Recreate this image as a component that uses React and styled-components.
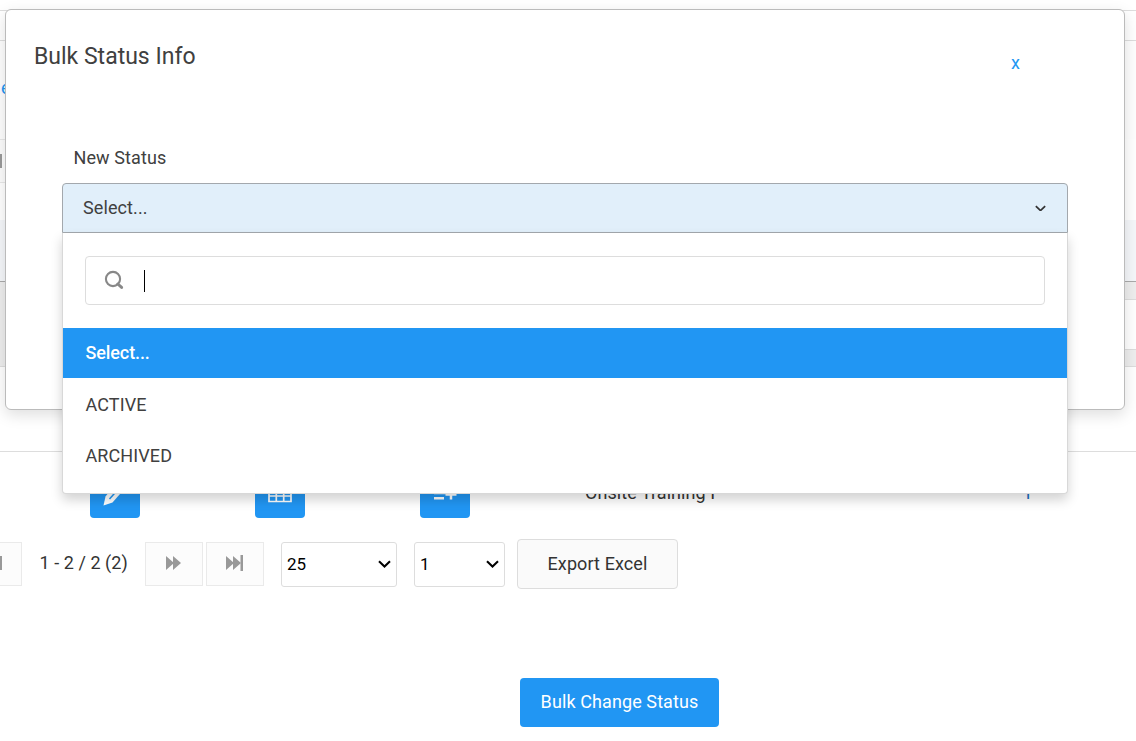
import styled, { createGlobalStyle } from 'styled-components';


const GlobalStyle = createGlobalStyle`
    * {
        box-sizing: border-box;
    }

    body {
        margin: 0;
        background: #fff;
        color: #333;
        font-family: Roboto, "Liberation Sans", sans-serif;
        font-size: 18px;
        overflow: hidden;
    }
`;

const statuses = ['Select...', 'ACTIVE', 'ARCHIVED'];

function PencilIcon() {
    return (
        <svg width="24" height="24" viewBox="0 0 24 24" fill="#fff">
            <path d="M1.500 23.500l2-9L14 1.500l7.500 6.500L10.500 20.500z" />
            <path d="M7.500 17l8.500-9.500" stroke="#2196f3" strokeWidth="1.500" />
        </svg>
    );
}

function TableIcon() {
    return (
        <svg width="24" height="18" viewBox="0 0 24 18" fill="none" stroke="#fff" strokeWidth="1.700">
            <path d="M1 1h22v15.500H1zM1 6h22M1 11h22M8.300 1v15.500M15.700 1v15.500" />
        </svg>
    );
}

function ListAddIcon() {
    return (
        <svg width="24" height="18" viewBox="0 0 24 18" fill="none" stroke="#fff" strokeWidth="2.500">
            <path d="M1 3h13M1 8h13M1 13.200h10M18 4v10.500M12.500 9.500h11" />
        </svg>
    );
}

function ForwardIcon({ last }) {
    return (
        <svg width={last ? 18 : 16} height="16" viewBox={last ? '0 0 18 16' : '0 0 16 16'} fill="#999">
            <path d="M0 1l8 7-8 7zM7 1l8 7-8 7z" />
            {last && <path d="M14.500 0h2.500v16h-2.500z" />}
        </svg>
    );
}

function Chevron({ color = '#000', size = 13 }) {
    return (
        <svg width={size} height={size * 0.62} viewBox="0 0 13 8" fill="none" stroke={color} strokeWidth="2.100">
            <path d="M1 1.300l5.500 5.200L12 1.300" />
        </svg>
    );
}

function SearchIcon() {
    return (
        <svg width="20" height="20" viewBox="0 0 20 20" fill="none" stroke="#888">
            <circle cx="9" cy="9" r="7.100" strokeWidth="2.100" />
            <path d="M13.800 14l3.800 3.400" strokeWidth="3" strokeLinecap="round" />
        </svg>
    );
}

function StatusDialog() {
    return (
        <Dialog>
            <DialogHeader>
                <Title>Bulk Status Info</Title>
                <Close>x</Close>
            </DialogHeader>
            <Label>New Status</Label>
            <Select>
                <SelectBox>
                    <SelectValue>Select...</SelectValue>
                    <Chevron color="#333" size={11} />
                </SelectBox>
                <Menu>
                    <Search>
                        <SearchIcon />
                        <Caret />
                    </Search>
                    {statuses.map((status, i) => (
                        <Option key={status} $active={i === 0}>{status}</Option>
                    ))}
                </Menu>
            </Select>
        </Dialog>
    );
}

function App() {
    return (
        <Page>
            <GlobalStyle />
            <TopGap />
            <TopBar />
            <LinkRow>e</LinkRow>
            <PagerStub><StubBar /></PagerStub>
            <TableHead />
            <DetailRow><DetailPanel /></DetailRow>
            <EmptyRow />
            <TableRow>
                <ActionCell><Action $lean><PencilIcon /></Action></ActionCell>
                <ActionCell><Action><TableIcon /></Action></ActionCell>
                <ActionCell><Action><ListAddIcon /></Action></ActionCell>
                <CourseName>Onsite Training I</CourseName>
                <Count>1</Count>
            </TableRow>
            <Pager>
                <PrevButton><StubBar /></PrevButton>
                <Range>1 - 2 / 2 (2)</Range>
                <PageButton><ForwardIcon /></PageButton>
                <PageButton><ForwardIcon last /></PageButton>
                <PagerSelect $width={116} $left={17}>
                    <PagerValue>25</PagerValue>
                    <Chevron />
                </PagerSelect>
                <PagerSelect $width={91} $left={17}>
                    <PagerValue>1</PagerValue>
                    <Chevron />
                </PagerSelect>
                <ExportButton>Export Excel</ExportButton>
            </Pager>
            <BulkButton>Bulk Change Status</BulkButton>
            <StatusDialog />
        </Page>
    );
}

const Page = styled.div`
    position: relative;
    display: flex;
    flex-direction: column;
    width: 1136px;
    height: 741px;
    overflow: hidden;
`;

const TopGap = styled.div`
    height: 11px;
    border-bottom: 1px solid #ddd;
`;

const TopBar = styled.div`
    height: 30px;
    border-bottom: 1px solid #ddd;
`;

const LinkRow = styled.div`
    height: 98px;
    padding: 36px 0 0 1px;
    color: #2196f3;
    line-height: 22px;
    background: #fefefe;
`;

const PagerStub = styled.div`
    display: flex;
    align-items: center;
    width: 30px;
    height: 44px;
    border: 1px solid #e8e8e8;
    border-left: 0;
    background: #fcfcfc;
`;

const StubBar = styled.div`
    width: 2px;
    height: 14px;
    background: #999;
`;

const TableHead = styled.div`
    height: 62px;
    margin-top: 37px;
    background: #f5f7fa;
    border-bottom: 1px solid #aaa;
`;

const DetailRow = styled.div`
    height: 85px;
    padding: 17px 0 16px 600px;
    background: #eee;
    border-bottom: 1px solid #ddd;
`;

const DetailPanel = styled.div`
    height: 51px;
    background: #fff;
    border: solid #ddd;
    border-width: 1px 0;
`;

const EmptyRow = styled.div`
    height: 85px;
    border-bottom: 1px solid #ddd;
`;

const TableRow = styled.div`
    display: flex;
    height: 66px;
    padding: 17px 0 0 90px;
`;

const ActionCell = styled.div`
    width: 165px;
`;

const Action = styled.div`
    display: flex;
    align-items: center;
    justify-content: center;
    width: 50px;
    height: 49px;
    padding-right: ${({ $lean }) => ($lean ? 3 : 0)}px;
    background: #2196f3;
    border-radius: 4px;
`;

const CourseName = styled.div`
    width: 437.500px;
    line-height: 48px;
    letter-spacing: 0.05px;
`;

const Count = styled.div`
    line-height: 48px;
    color: #1b6fc0;
`;

const Pager = styled.div`
    display: flex;
    height: 50px;
    margin-top: 21px;
    padding-top: 3px;
`;

const PageButton = styled.div`
    display: flex;
    align-items: center;
    justify-content: center;
    width: 58px;
    height: 44px;
    margin-right: 3px;
    padding: 0 0 2px;
    background: #fcfcfc;
    border: 1px solid #eaeaea;
`;

const PrevButton = styled(PageButton)`
    justify-content: flex-start;
    width: 22px;
    margin: 0;
    border-left: 0;
`;

const Range = styled.div`
    width: 123px;
    padding-left: 17.500px;
    line-height: 42px;
    letter-spacing: 0.05px;
`;

const PagerSelect = styled.div`
    display: flex;
    align-items: center;
    justify-content: space-between;
    width: ${({ $width }) => $width}px;
    height: 45px;
    margin-left: ${({ $left }) => $left}px;
    padding: 0 5px;
    color: #000;
    font-size: 17px;
    border: 1px solid #ddd;
    border-radius: 3px;

    ${PageButton} + & {
        margin-left: 14px;
    }
`;

const PagerValue = styled.span`
    padding-bottom: 2px;
`;

const Button = styled.div`
    display: flex;
    align-items: center;
    justify-content: center;
    padding-bottom: 2px;
    border-radius: 4px;
    letter-spacing: 0.1px;
`;

const ExportButton = styled(Button)`
    width: 161px;
    height: 50px;
    margin: -3px 0 0 12px;
    background: #fafafa;
    border: 1px solid #ddd;
`;

const BulkButton = styled(Button)`
    width: 199px;
    height: 49px;
    margin: 89px 0 0 520px;
    color: #fff;
    background: #2196f3;
`;

const Dialog = styled.div`
    position: absolute;
    top: 9px;
    left: 5px;
    width: 1120px;
    height: 401px;
    padding: 0 56px;
    color: #404040;
    background: #fff;
    border: 1px solid #bbb;
    border-radius: 6px;
    box-shadow: 0 5px 15px rgba(0, 0, 0, 0.13);
`;

const DialogHeader = styled.div`
    display: flex;
    justify-content: space-between;
    height: 136px;
    margin-left: -28px;
    padding: 29px 48px 0 0;
`;

const Title = styled.div`
    font-size: 23px;
    line-height: 36px;
`;

const Close = styled.div`
    padding-top: 14px;
    font-size: 18px;
    line-height: 20px;
    color: #2196f3;
`;

const Label = styled.div`
    height: 37px;
    padding-left: 11.500px;
    line-height: 24px;
    letter-spacing: 0.1px;
`;

const Select = styled.div`
    position: relative;
`;

const SelectBox = styled.div`
    display: flex;
    align-items: center;
    justify-content: space-between;
    height: 50px;
    padding: 0 21px 0 20px;
    background: #e1effa;
    border: 1px solid #a3a8ad;
    border-radius: 4px 4px 0 0;
`;

const SelectValue = styled.span`
    padding-bottom: 2px;
    letter-spacing: 0.1px;
`;

const Menu = styled.div`
    position: absolute;
    top: 50px;
    left: 0;
    right: 0;
    height: 261px;
    padding-top: 23px;
    background: #fff;
    border: 1px solid #d8d8d8;
    border-top: 0;
    border-radius: 0 0 4px 4px;
    box-shadow: 0 6px 12px rgba(0, 0, 0, 0.175);
`;

const Search = styled.div`
    display: flex;
    align-items: center;
    gap: 20px;
    height: 49px;
    margin: 0 22px 23px;
    padding: 0 0 1px 18px;
    border: 1px solid #ddd;
    border-radius: 4px;
`;

const Caret = styled.div`
    width: 1px;
    height: 22px;
    margin-top: 2px;
    background: #000;
`;

const Option = styled.div`
    height: ${({ $active }) => ($active ? 50 : 51)}px;
    margin-bottom: ${({ $active }) => ($active ? 1 : 0)}px;
    padding-left: 22.500px;
    line-height: ${({ $active }) => ($active ? 50 : 52)}px;
    letter-spacing: ${({ $active }) => ($active ? -0.1 : 0.1)}px;
    font-weight: ${({ $active }) => ($active ? 500 : 400)};
    color: ${({ $active }) => ($active ? '#fff' : '#404040')};
    background: ${({ $active }) => ($active ? '#2196f3' : '#fff')};
`;

export default App;
